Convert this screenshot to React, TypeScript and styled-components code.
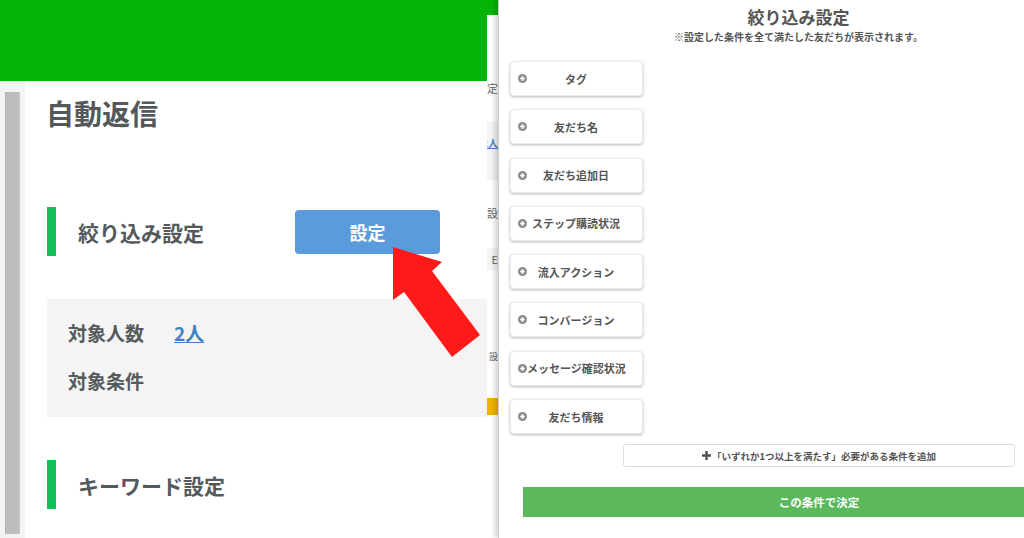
import React from "react";
import styled, { createGlobalStyle } from "styled-components";

const GlobalStyle = createGlobalStyle`
  html, body {
    margin: 0;
    padding: 0;
    background: #fff;
  }
  body {
    font-family: "Noto Sans CJK JP", "Noto Sans", sans-serif;
    color: #555;
  }
  * { box-sizing: border-box; }
`;

const filterOptions = [
  "タグ",
  "友だち名",
  "友だち追加日",
  "ステップ購読状況",
  "流入アクション",
  "コンバージョン",
  "メッセージ確認状況",
  "友だち情報",
];

// ==================== small drawings ====================
function PlusCircle() {
  return (
    <svg width="9" height="9" viewBox="0 0 10 10">
      <circle cx="5" cy="5" r="5" fill="#8c8c8c" />
      <rect x="2.4" y="4.1" width="5.2" height="1.8" fill="#fff" />
      <rect x="4.1" y="2.4" width="1.8" height="5.2" fill="#fff" />
    </svg>
  );
}

function BoldPlus() {
  return (
    <svg width="9" height="9" viewBox="0 0 10 10">
      <rect x="0" y="3.6" width="10" height="2.8" fill="#555" />
      <rect x="3.6" y="0" width="2.8" height="10" fill="#555" />
    </svg>
  );
}

// ==================== Main Component ====================
export default function App() {
  return (
    <>
      <GlobalStyle />
      <Screen>
        <LeftArea>
          <Header />
          <Body>
            <Sidebar>
              <ScrollThumb />
            </Sidebar>
            <Page>
              <PageTitle>自動返信</PageTitle>

              <SectionRow $top={76}>
                <AccentBar />
                <SectionLabel>絞り込み設定</SectionLabel>
                <SettingButton>設定</SettingButton>
              </SectionRow>

              <InfoBox>
                <InfoRow>
                  <InfoLabel>対象人数</InfoLabel>
                  <CountLink>2人</CountLink>
                </InfoRow>
                <InfoRow>
                  <InfoLabel>対象条件</InfoLabel>
                </InfoRow>
              </InfoBox>

              <SectionRow $top={43}>
                <AccentBar />
                <SectionLabel>キーワード設定</SectionLabel>
              </SectionRow>
            </Page>

            {/* edge of the panel that sits under the modal */}
            <Peek>
              <PeekText $h={14} $mt={66}>定</PeekText>
              <PeekBlock $h={58} $mt={27}>
                <PeekLink>2人</PeekLink>
              </PeekBlock>
              <PeekText $h={14} $mt={26}>設</PeekText>
              <PeekBlock $h={22} $mt={28}>
                <PeekText $h={22} $mt={0}>E</PeekText>
              </PeekBlock>
              <PeekText $h={12} $mt={81} $small>設</PeekText>
              <PeekYellow />
            </Peek>
          </Body>
        </LeftArea>

        <Modal>
          <ModalTitle>絞り込み設定</ModalTitle>
          <ModalNote>※設定した条件を全て満たした友だちが表示されます。</ModalNote>

          <OptionList>
            {filterOptions.map((label) => (
              <OptionButton key={label}>
                <PlusCircle />
                <OptionText>{label}</OptionText>
              </OptionButton>
            ))}
          </OptionList>

          <AddButton>
            <BoldPlus />
            「いずれか1つ以上を満たす」必要がある条件を追加
          </AddButton>

          <DecideButton>この条件で決定</DecideButton>
        </Modal>

        <ArrowLayer viewBox="0 0 1024 538" width="1024" height="538">
          <polygon
            points="393,247 442,262 432,271 480,335 452,357 404,292 393,300"
            fill="#ff1a1a"
          />
        </ArrowLayer>
      </Screen>
    </>
  );
}

// ==================== Styled Components ====================

const Screen = styled.div`
  position: relative;
  width: 1024px;
  height: 538px;
  overflow: hidden;
  display: flex;
  background: #fff;
`;

const LeftArea = styled.div`
  width: 498px;
  flex: none;
  display: flex;
  flex-direction: column;
`;

const Header = styled.div`
  height: 81px;
  background: #05b305;
`;

const Body = styled.div`
  flex: 1;
  display: flex;
`;

const Sidebar = styled.div`
  width: 25px;
  flex: none;
  background: #f3f3f3;
  padding: 11px 5px 4px 5px;
  display: flex;
`;

const ScrollThumb = styled.div`
  flex: 1;
  background: #bdbdbd;
  border-left: 1px solid #b3b3b3;
  border-right: 1px solid #c8c8c8;
`;

const Page = styled.div`
  width: 462px;
  flex: none;
  padding: 14px 0 0 22px;
  display: flex;
  flex-direction: column;
`;

const PageTitle = styled.h1`
  margin: 0 0 0 -1px;
  font-size: 28px;
  line-height: 36px;
  font-weight: 700;
  color: #53585b;
`;

const SectionRow = styled.div<{ $top: number }>`
  margin-top: ${(p) => p.$top}px;
  height: 49px;
  display: flex;
  align-items: center;
`;

const AccentBar = styled.div`
  width: 9px;
  align-self: stretch;
  background: #12c05a;
`;

const SectionLabel = styled.div`
  width: 239px;
  padding-left: 22px;
  font-size: 21px;
  font-weight: 700;
  color: #555a5d;
`;

const SettingButton = styled.button`
  width: 145px;
  height: 44px;
  border: none;
  border-radius: 4px;
  background: #5b9bdb;
  color: #fff;
  font-family: inherit;
  font-size: 18px;
  font-weight: 700;
  padding: 0;
`;

const InfoBox = styled.div`
  margin-top: 43px;
  background: #f4f4f4;
  padding: 14px 21px 18px;
  display: flex;
  flex-direction: column;
  gap: 10px;
`;

const InfoRow = styled.div`
  display: flex;
  align-items: center;
  height: 38px;
`;

const InfoLabel = styled.span`
  width: 106px;
  font-size: 19px;
  font-weight: 700;
  color: #555a5d;
`;

const CountLink = styled.a`
  font-size: 19px;
  font-weight: 700;
  color: #3d82c4;
  text-decoration: underline;
`;

const Peek = styled.div`
  position: relative;
  width: 11px;
  flex: none;
  margin-top: -66px;
  background: #fff;
  display: flex;
  flex-direction: column;
  overflow: hidden;
`;

const PeekText = styled.div<{ $h: number; $mt: number; $small?: boolean }>`
  margin-top: ${(p) => p.$mt}px;
  height: ${(p) => p.$h}px;
  line-height: ${(p) => p.$h}px;
  display: flex;
  justify-content: flex-end;
  white-space: nowrap;
  font-size: ${(p) => (p.$small ? 9 : 11)}px;
  color: #666;
`;

const PeekBlock = styled.div<{ $h: number; $mt: number }>`
  margin-top: ${(p) => p.$mt}px;
  height: ${(p) => p.$h}px;
  background: #f4f4f4;
  display: flex;
  align-items: center;
  justify-content: flex-end;
`;

const PeekLink = styled.span`
  font-size: 10px;
  font-weight: 700;
  color: #3d82c4;
  white-space: nowrap;
  text-decoration: underline;
  margin-bottom: 18px;
`;

const PeekYellow = styled.div`
  margin-top: 35px;
  height: 17px;
  background: #f0b400;
`;

const Modal = styled.div`
  position: relative;
  z-index: 2;
  width: 600px;
  flex: none;
  background: #fff;
  border-left: 1px solid #cfcfcf;
  box-shadow: -3px 0 5px rgba(0, 0, 0, 0.18);
  padding-top: 6px;
  display: flex;
  flex-direction: column;
`;

const ModalTitle = styled.div`
  text-align: center;
  font-size: 17px;
  line-height: 22px;
  font-weight: 700;
  color: #555;
`;

const ModalNote = styled.div`
  text-align: center;
  font-size: 10px;
  line-height: 14px;
  font-weight: 700;
  color: #555;
  margin-top: 2px;
`;

const OptionList = styled.div`
  margin: 17px 0 0 11px;
  display: flex;
  flex-direction: column;
  gap: 13.3px;
`;

const OptionButton = styled.div`
  width: 133px;
  height: 35px;
  border: 1px solid #ececec;
  border-radius: 4px;
  background: #fff;
  box-shadow: 0 1px 3px rgba(0, 0, 0, 0.28);
  display: flex;
  align-items: center;
  padding: 0 17px 0 7px;

  svg {
    flex: none;
  }
`;

const OptionText = styled.span`
  flex: 1;
  text-align: center;
  white-space: nowrap;
  font-size: 11px;
  font-weight: 700;
  color: #555;
`;

const AddButton = styled.div`
  margin: 10px 0 0 124px;
  width: 392px;
  height: 23px;
  border: 1px solid #dcdcdc;
  border-radius: 3px;
  background: #fff;
  display: flex;
  align-items: center;
  justify-content: center;
  gap: 1px;
  font-size: 9.5px;
  font-weight: 700;
  color: #555;
  white-space: nowrap;
`;

const DecideButton = styled.div`
  margin: 20px 0 0 24px;
  width: 592px;
  height: 30px;
  background: #5cb85c;
  color: #fff;
  display: flex;
  align-items: center;
  justify-content: center;
  font-size: 11.5px;
  font-weight: 700;
  white-space: nowrap;
`;

const ArrowLayer = styled.svg`
  position: absolute;
  left: 0;
  top: 0;
  z-index: 3;
  pointer-events: none;
`;
